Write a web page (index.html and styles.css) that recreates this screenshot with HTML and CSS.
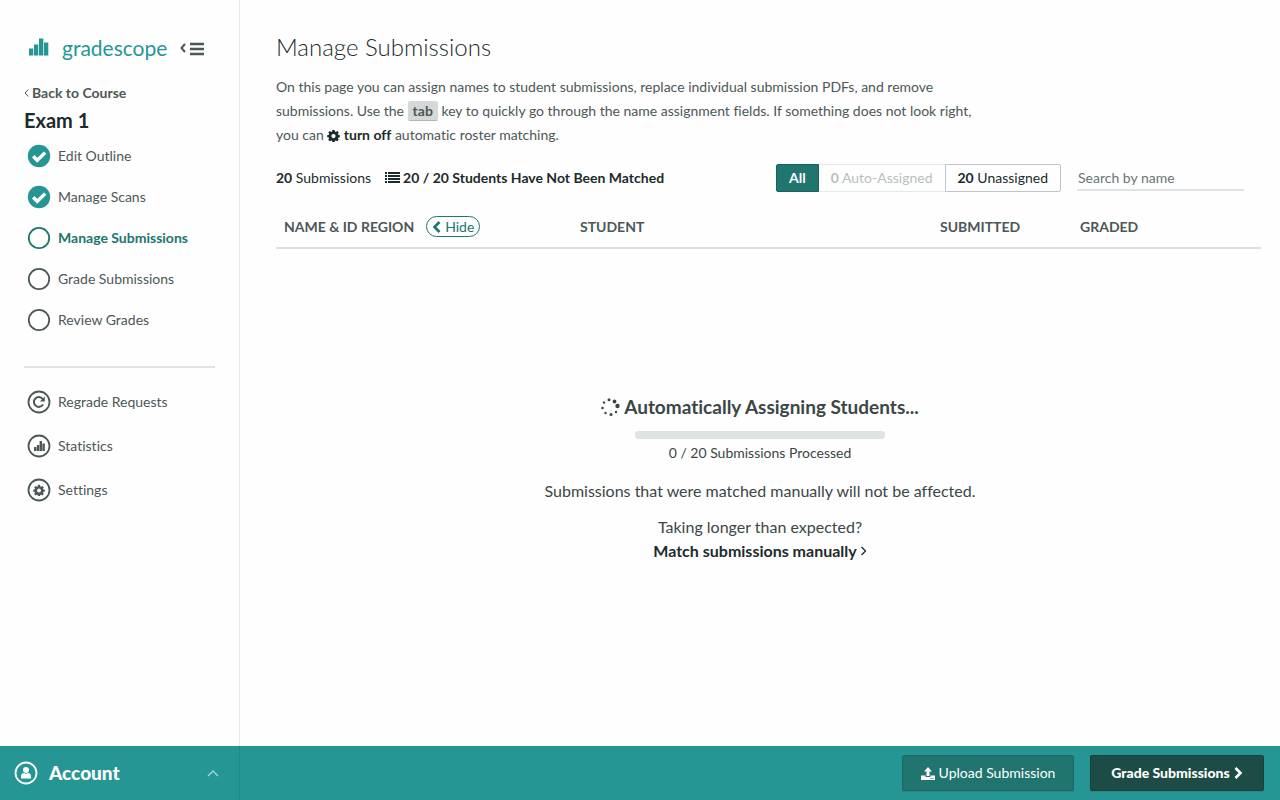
FILE: index.html
```html
<!DOCTYPE html>
<html lang="en">
<head>
<meta charset="utf-8">
<meta name="viewport" content="width=device-width, initial-scale=1">
<title>Manage Submissions | Gradescope</title>
<link rel="stylesheet" href="styles.css">
</head>
<body>
<svg class="sprite" aria-hidden="true">
  <symbol id="gear" viewBox="0 0 14 14"><path fill-rule="evenodd" d="M5.8 1h2.4l.4 1.8.9.4 1.5-1 1.7 1.7-1 1.6.4.8 1.7.4v2.1l-1.7.5-.4.8 1 1.5-1.7 1.7-1.6-1-.8.4-.4 1.7H5.8l-.4-1.7-.8-.4-1.6 1-1.7-1.7 1-1.6-.3-.8L.2 8.800V6.600L2 6.200l.4-.9-1-1.5L3 2.200l1.600 1 .8-.4zM7 5.300a2.300 2.300 0 1 0 0 4.600 2.300 2.300 0 0 0 0-4.600z"/></symbol>
  <symbol id="done" viewBox="0 0 24 24"><circle cx="12" cy="12" r="11.200" fill="#269694"/><path d="M6.200 12.300l4 4 8-7.700" fill="none" stroke="#fff" stroke-width="3.400"/></symbol>
  <symbol id="open" viewBox="0 0 24 24"><circle cx="12" cy="12" r="10.200" fill="none" stroke="currentColor" stroke-width="1.800"/></symbol>
</svg>
<div class="layout">
  <aside class="sidebar">
    <header class="brand">
      <a class="logo" href="#" aria-label="Gradescope home">
        <svg class="bars" viewBox="0 0 20 18" fill="#269694" aria-hidden="true"><path d="M0 10.500h4.300v7H0zM5 6.500h4.300v11H5zM10 .5h4.300v17H10zM15 4.500h4.300v13H15z"/></svg>
        <span>gradescope</span>
      </a>
      <button class="collapse" type="button" aria-label="Collapse sidebar">
        <svg width="26" height="16" viewBox="0 0 26 16" aria-hidden="true"><path d="M6 4L2.500 8 6 12" fill="none" stroke="currentColor" stroke-width="2"/><path d="M11 4h14M11 9h14M11 14h14" stroke="currentColor" stroke-width="2.400"/></svg>
      </button>
    </header>
    <a class="back" href="#"><svg width="5" height="8" viewBox="0 0 5 8" aria-hidden="true"><path d="M4.300.5L1 4l3.300 3.500" fill="none" stroke="currentColor"/></svg>Back to Course</a>
    <h2 class="assignment">Exam 1</h2>
    <nav aria-label="Assignment steps">
      <ul class="steps">
        <li><a href="#"><svg class="nav-icon"><use href="#done"/></svg>Edit Outline</a></li>
        <li><a href="#"><svg class="nav-icon"><use href="#done"/></svg>Manage Scans</a></li>
        <li><a class="current" href="#" aria-current="page"><svg class="nav-icon"><use href="#open"/></svg>Manage Submissions</a></li>
        <li><a href="#"><svg class="nav-icon"><use href="#open"/></svg>Grade Submissions</a></li>
        <li><a href="#"><svg class="nav-icon"><use href="#open"/></svg>Review Grades</a></li>
      </ul>
      <ul class="steps tools">
        <li><a href="#"><svg class="nav-icon" viewBox="0 0 24 24"><circle cx="12" cy="12" r="10.500" fill="none" stroke="currentColor" stroke-width="1.800"/><path d="M16 14.500a4.900 4.900 0 1 1-.3-5.500" fill="none" stroke="currentColor" stroke-width="2"/><path d="M17.800 6.500v5h-5z" fill="currentColor"/></svg>Regrade Requests</a></li>
        <li><a href="#"><svg class="nav-icon" viewBox="0 0 24 24"><circle cx="12" cy="12" r="10.500" fill="none" stroke="currentColor" stroke-width="1.800"/><path d="M7 13h2.400v4H7zM9.800 11h2.400v6H9.800zM12.600 7H15v10h-2.400zM15.400 9.500h2.400V17h-2.400z" fill="currentColor"/></svg>Statistics</a></li>
        <li><a href="#"><svg class="nav-icon" viewBox="0 0 24 24"><circle cx="12" cy="12" r="10.500" fill="none" stroke="currentColor" stroke-width="1.800"/><use href="#gear" x="6" y="6" width="12" height="12" fill="currentColor"/></svg>Settings</a></li>
      </ul>
    </nav>
  </aside>
  <main class="content">
    <h1>Manage Submissions</h1>
    <p class="intro">On this page you can assign names to student submissions, replace individual submission PDFs, and remove submissions. Use the <kbd>tab</kbd> key to quickly go through the name assignment fields. If something does not look right, you can <a href="#"><svg class="inline-gear" aria-hidden="true"><use href="#gear"/></svg> turn off</a> automatic roster matching.</p>
    <div class="toolbar">
      <p class="count"><strong>20</strong> Submissions</p>
      <a class="unmatched" href="#"><svg width="15" height="12" viewBox="0 0 15 12" fill="currentColor" aria-hidden="true"><path d="M0 0h2v2H0zM3 0h12v2H3zM0 3h2v2H0zM3 3h12v2H3zM0 6h2v2H0zM3 6h12v2H3zM0 9h2v2H0zM3 9h12v2H3z"/></svg>20 / 20 Students Have Not Been Matched</a>
      <div class="filters" role="group" aria-label="Filter submissions">
        <button class="active" type="button">All</button>
        <button type="button" disabled><b>0</b> Auto-Assigned</button>
        <button type="button"><b>20</b> Unassigned</button>
      </div>
      <input class="search" type="search" placeholder="Search by name" aria-label="Search by name">
    </div>
    <table class="submissions">
      <thead><tr>
        <th class="col-region" scope="col"><span class="region">Name &amp; ID Region <button type="button"><svg width="9" height="12" viewBox="0 0 9 12" aria-hidden="true"><path d="M7.500 1L2.500 6l5 5" fill="none" stroke="currentColor" stroke-width="2.600"/></svg>Hide</button></span></th>
        <th class="col-student" scope="col">Student</th>
        <th class="col-submitted" scope="col">Submitted</th>
        <th scope="col">Graded</th>
      </tr></thead>
    </table>
    <section class="status" aria-live="polite">
      <h2><svg width="19" height="19" viewBox="0 0 19 19" fill="currentColor" aria-hidden="true"><circle cx="8" cy="1.800" r="1.500"/><circle cx="13.500" cy="3.500" r="1.900"/><circle cx="16.500" cy="8" r="2.200"/><circle cx="15" cy="14" r="1.200"/><circle cx="10" cy="16.500" r="1.500"/><circle cx="4.500" cy="15" r="1.200"/><circle cx="1.500" cy="10" r="1.300"/><circle cx="3" cy="4.500" r="1.200"/></svg>Automatically Assigning Students...</h2>
      <div class="meter" role="progressbar" aria-label="Submissions processed" aria-valuemin="0" aria-valuemax="20" aria-valuenow="0"></div>
      <p class="processed">0 / 20 Submissions Processed</p>
      <p class="note">Submissions that were matched manually will not be affected.</p>
      <p>Taking longer than expected?</p>
      <a href="#">Match submissions manually<svg width="7" height="10" viewBox="0 0 7 10" aria-hidden="true"><path d="M1.500 1l4 4-4 4" fill="none" stroke="currentColor" stroke-width="1.300"/></svg></a>
    </section>
  </main>
  <footer class="footer">
    <button class="account" type="button">
      <svg class="avatar" viewBox="0 0 24 24" aria-hidden="true"><circle cx="12" cy="12" r="10.500" fill="none" stroke="#fff" stroke-width="1.800"/><circle cx="12" cy="9" r="3" fill="#fff"/><path d="M7 17.500v-2q0-3.500 3-3.500 2 1.300 4 0 3 0 3 3.500v2z" fill="#fff"/></svg>
      <span>Account</span>
      <svg width="12" height="8" viewBox="0 0 12 8" aria-hidden="true"><path d="M1 7l5-5 5 5" fill="none" stroke="#a8d5d4" stroke-width="1.400"/></svg>
    </button>
    <div class="actions">
      <button class="upload" type="button"><svg width="14" height="13" viewBox="0 0 14 13" fill="currentColor" aria-hidden="true"><path d="M7 0l4 4.500H8.500V9h-3V4.500H3z"/><path fill-rule="evenodd" d="M.5 8.500h4V10h5V8.500h4a.5.500 0 0 1 .5.500v3.500a.5.500 0 0 1-.5.500H.5a.5.500 0 0 1-.5-.5V9a.5.500 0 0 1 .5-.5zM9.500 11h1v1h-1zM11.500 11h1v1h-1z"/></svg>Upload Submission</button>
      <button class="grade" type="button">Grade Submissions<svg width="9" height="12" viewBox="0 0 9 12" aria-hidden="true"><path d="M1.500 1l5 5-5 5" fill="none" stroke="currentColor" stroke-width="2.600"/></svg></button>
    </div>
  </footer>
</div>
</body>
</html>
```

FILE: styles.css
```css
* { box-sizing: border-box; }
body { margin: 0; background: #fefefe; color: #4d5757; font: 14px/24px Lato, "Open Sans", sans-serif; font-variant-ligatures: none; }
h1, h2, p, ul { margin: 0; padding: 0; }
ul { list-style: none; }
a { color: inherit; text-decoration: none; }
button, input { font: inherit; color: inherit; }
button { cursor: pointer; }
.sprite { display: none; }
.layout { display: grid; grid-template: 1fr auto / 240px minmax(0, 1fr); min-height: 100vh; }

.sidebar { padding: 36px 24px 24px; border-right: 1px solid #e6e9e9; }
.brand { display: flex; align-items: center; justify-content: space-between; padding: 0 10px 0 5px; }
.logo { display: flex; align-items: center; gap: 13px; color: #269694; font-size: 21px; }
.bars { width: 20px; height: 18px; margin-bottom: 2px; }
.collapse { display: flex; padding: 0; border: 0; background: none; color: #4d5757; }
.back { display: flex; align-items: center; gap: 3px; margin-top: 21px; font-weight: 700; }
.assignment { color: #1c2b2b; font-size: 20px; font-weight: 700; line-height: 30px; }
.steps { display: grid; gap: 17px; padding-top: 9px; }
.steps a { display: flex; align-items: center; gap: 7px; padding-left: 3px; }
.steps .current { color: #20756f; font-weight: 700; }
.nav-icon { width: 24px; height: 24px; flex: none; }
.tools { gap: 20px; margin-top: 34px; padding-top: 22px; border-top: 2px solid #dee3e3; }

.content { padding: 31px 19px 24px 36px; }
h1 { color: #1c2b2b; font-size: 24px; font-weight: 300; line-height: 32px; }
.intro { max-width: 700px; margin-top: 12px; }
.intro a { color: #1c2b2b; font-weight: 700; }
.inline-gear { width: 13px; height: 13px; fill: currentColor; vertical-align: -2px; }
kbd { padding: 1px 5px; border-radius: 2px; background: #d5d8d8; box-shadow: 0 1px #aeb5b5; font: inherit; font-weight: 700; }
.toolbar { display: flex; align-items: center; margin-top: 17px; padding-right: 17px; color: #1c2b2b; }
.unmatched { display: flex; align-items: center; gap: 3px; margin-left: 14px; font-weight: 700; }
.filters { display: flex; margin-left: auto; }
.filters button { height: 28px; padding: 0 12px; border: 1px solid #bdc6cc; background: #fefefe; line-height: 24px; }
.filters button:disabled { border-color: #e6e9ea; border-width: 1px 0; color: #b9bfbf; cursor: default; }
.filters .active { border-color: #1c5f5b; border-radius: 2px 0 0 2px; background: #20756f; color: #fff; font-weight: 700; }
.filters button:last-child { border-radius: 0 2px 2px 0; }
.search { width: 167px; height: 26px; margin-left: 16px; padding: 0 1px; border: 0; border-bottom: 2px solid #dee3e3; border-radius: 0; background: none; outline: 0; appearance: none; }
.search::placeholder { color: #697575; opacity: 1; }
.submissions { width: 100%; margin-top: 14px; border-collapse: collapse; table-layout: fixed; }
.submissions th { height: 42px; padding: 0 8px; border-bottom: 2px solid #dbe0e3; text-align: left; text-transform: uppercase; }
.col-region { width: 296px; }
.col-student { width: 360px; }
.col-submitted { width: 140px; }
.region { display: flex; align-items: center; gap: 12px; }
.region button { display: flex; align-items: center; gap: 4px; height: 21px; padding: 0 5px; border: 1px solid #20756f; border-radius: 11px; background: none; color: #20756f; font-weight: 400; }
.status { display: flex; flex-direction: column; align-items: center; margin-top: 145px; padding-right: 17px; color: #3b4646; font-size: 16px; text-align: center; }
.status h2 { display: flex; align-items: center; gap: 4px; font-size: 19px; font-weight: 700; line-height: 26px; }
.meter { width: 250px; height: 8px; margin-top: 11px; border-radius: 4px; background: #dee3e3; }
.processed { margin-top: 2px; font-size: 14px; }
.note { margin: 14px 0 12px; }
.status a { display: flex; align-items: center; gap: 3px; color: #1c2b2b; font-weight: 700; }

.footer { grid-column: 1 / -1; display: grid; grid-template-columns: 240px 1fr; height: 54px; background: #269694; color: #fff; }
.account { display: flex; align-items: center; gap: 11px; padding: 0 20px 0 14px; border: 0; border-right: 1px solid #22898a; background: none; font-size: 19px; font-weight: 900; }
.account span { flex: 1; text-align: left; }
.avatar { width: 24px; height: 24px; }
.actions { display: flex; align-items: center; justify-content: flex-end; gap: 16px; padding-right: 16px; }
.actions button { display: flex; align-items: center; justify-content: center; gap: 4px; height: 36px; border: 1px solid #1f6762; border-radius: 2px; box-shadow: 0 1px 1px #1d787666; }
.upload { width: 172px; background: #20756f; }
.actions .grade { width: 174px; border-color: #1a403c; background: #1d4b46; font-weight: 900; }
```
